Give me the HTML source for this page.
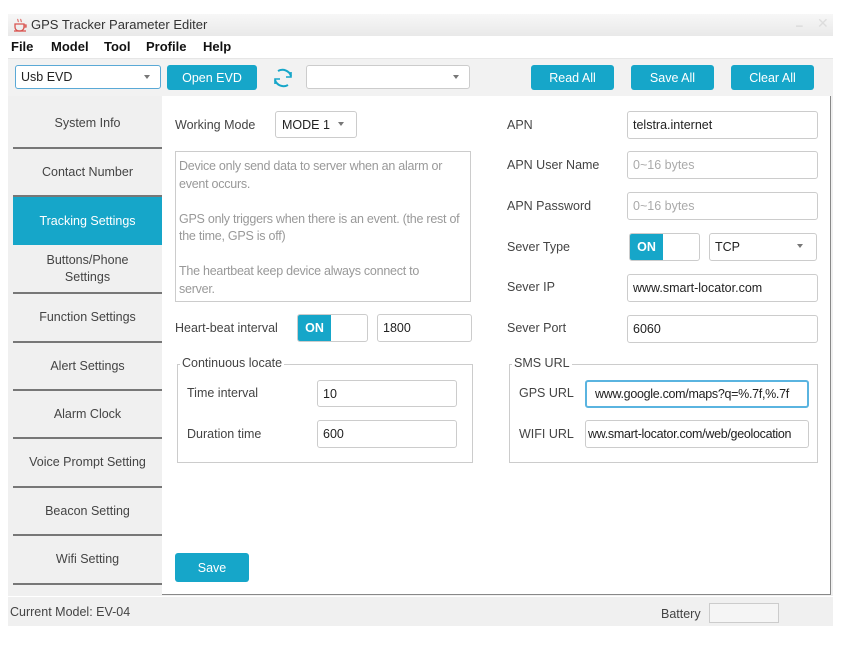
<!DOCTYPE html><html><head><style>
*{box-sizing:border-box;margin:0;padding:0}
body{width:854px;height:647px;background:#fff;position:relative;font-family:"Liberation Sans",sans-serif;font-size:12.5px;color:#444;overflow:hidden}
.a{position:absolute}
.t{position:absolute;white-space:nowrap}
.in{position:absolute;border:1px solid #ccc;border-radius:3px;background:#fff;padding-left:5px;display:flex;align-items:center;font-size:12.5px;color:#222;overflow:hidden;white-space:nowrap}
.btn{position:absolute;background:#16a6c9;color:#fff;border-radius:3px;display:flex;align-items:center;justify-content:center;font-size:12.5px}
.nav{position:absolute;left:13px;width:149px;background:#f0f0f0;border-bottom:2px solid #777;display:flex;align-items:center;justify-content:center;text-align:center;font-size:12.5px;color:#444;line-height:17px}
.tg{position:absolute;border:1px solid #ccc;border-radius:3px;background:#fff;overflow:hidden}
.tg b{display:flex;align-items:center;justify-content:center;width:33px;height:100%;background:#16a6c9;color:#fff;font-size:12.5px}
.ar{position:absolute;width:0;height:0;border-left:3px solid transparent;border-right:3px solid transparent;border-top:4px solid #777}
fieldset{position:absolute;border:1px solid #ccc;}
.lg{position:absolute;background:#fff;padding:0 2px;font-size:12.5px}
</style></head><body>
<div class="a" style="left:8px;top:14px;width:825px;height:22px;background:linear-gradient(#f7f7f7,#e9e9e9)"></div>
<svg class="a" style="left:12px;top:17px" width="16" height="16" viewBox="0 0 16 16"><path d="M3 7h9v3a4 4 0 0 1-4 4h-1a4 4 0 0 1-4-4z M12 8h2v2h-2" fill="none" stroke="#d9534f" stroke-width="1.3"/><path d="M2 14h12" stroke="#d9534f" stroke-width="1.3"/><path d="M6 2c-1 1 1 2 0 3M9 2c-1 1 1 2 0 3" stroke="#d9534f" fill="none"/></svg>
<div class="t" style="left:31px;top:17px;font-size:13px;color:#333">GPS Tracker Parameter Editer</div>
<div class="t" style="left:796px;top:18px;color:#ccc;font-size:12px">–</div>
<div class="t" style="left:817px;top:15px;color:#ddd;font-size:14px">✕</div>
<div class="t" style="left:11px;top:39px;font-weight:bold;font-size:13px;color:#111">File</div>
<div class="t" style="left:51px;top:39px;font-weight:bold;font-size:13px;color:#111">Model</div>
<div class="t" style="left:104px;top:39px;font-weight:bold;font-size:13px;color:#111">Tool</div>
<div class="t" style="left:146px;top:39px;font-weight:bold;font-size:13px;color:#111">Profile</div>
<div class="t" style="left:203px;top:39px;font-weight:bold;font-size:13px;color:#111">Help</div>
<div class="a" style="left:8px;top:58px;width:825px;height:38px;background:#f2f2f2;border-top:1px solid #e6e6e6"></div>
<div class="in" style="left:15px;top:65px;width:146px;height:24px;border-color:#5aa9d6">Usb EVD</div><div class="ar" style="left:144px;top:75px"></div>
<div class="btn" style="left:167px;top:65px;width:90px;height:25px">Open EVD</div>
<svg class="a" style="left:271px;top:66px" width="24" height="24" viewBox="0 0 24 24"><path d="M7 5a9 9 0 0 1 13 5M17 19a9 9 0 0 1-13-5" fill="none" stroke="#16a6c9" stroke-width="2"/><path d="M20 6v5h-5M4 18v-5h5" fill="none" stroke="#16a6c9" stroke-width="1.6"/></svg>
<div class="in" style="left:306px;top:65px;width:164px;height:24px"></div><div class="ar" style="left:453px;top:75px"></div>
<div class="btn" style="left:531px;top:65px;width:83px;height:25px">Read All</div>
<div class="btn" style="left:631px;top:65px;width:83px;height:25px">Save All</div>
<div class="btn" style="left:731px;top:65px;width:83px;height:25px">Clear All</div>
<div class="a" style="left:8px;top:96px;width:825px;height:500px;background:#f0f0f0"></div>
<div class="a" style="left:162px;top:96px;width:669px;height:499px;background:#fff;border-right:1px solid #888;border-bottom:1px solid #888"></div>
<div class="nav" style="top:100px;height:49px">System Info</div>
<div class="nav" style="top:149px;height:48px">Contact Number</div>
<div class="nav" style="top:197px;height:48px;background:#16a6c9;color:#fff;border-bottom:none">Tracking Settings</div>
<div class="nav" style="top:245px;height:49px">Buttons/Phone<br>Settings</div>
<div class="nav" style="top:294px;height:49px">Function Settings</div>
<div class="nav" style="top:343px;height:48px">Alert Settings</div>
<div class="nav" style="top:391px;height:48px">Alarm Clock</div>
<div class="nav" style="top:439px;height:49px">Voice Prompt Setting</div>
<div class="nav" style="top:488px;height:48px">Beacon Setting</div>
<div class="nav" style="top:536px;height:49px">Wifi Setting</div>
<div class="t" style="left:175px;top:118px">Working Mode</div>
<div class="in" style="left:275px;top:111px;width:82px;height:27px;padding-left:6px">MODE 1</div><div class="ar" style="left:338px;top:122px"></div>
<div class="a" style="left:175px;top:151px;width:296px;height:151px;border:1px solid #ccc;padding:6px 3px;color:#999;font-size:12.5px;line-height:17.5px;letter-spacing:-0.25px">Device only send data to server when an alarm or event occurs.<br><br>GPS only triggers when there is an event. (the rest of the time, GPS is off)<br><br>The heartbeat keep device always connect to<br>server.</div>
<div class="t" style="left:175px;top:321px">Heart-beat interval</div>
<div class="tg" style="left:297px;top:314px;width:71px;height:28px"><b>ON</b></div>
<div class="in" style="left:377px;top:314px;width:95px;height:28px">1800</div>
<fieldset style="left:177px;top:364px;width:296px;height:99px"></fieldset><div class="lg" style="left:180px;top:356px">Continuous locate</div>
<div class="t" style="left:187px;top:386px">Time interval</div>
<div class="in" style="left:317px;top:380px;width:140px;height:27px">10</div>
<div class="t" style="left:187px;top:427px">Duration time</div>
<div class="in" style="left:317px;top:420px;width:140px;height:28px">600</div>
<div class="t" style="left:507px;top:118px">APN</div>
<div class="in" style="left:627px;top:111px;width:191px;height:28px">telstra.internet</div>
<div class="t" style="left:507px;top:158px">APN User Name</div>
<div class="in" style="left:627px;top:151px;width:191px;height:28px;color:#aaa">0~16 bytes</div>
<div class="t" style="left:507px;top:199px">APN Password</div>
<div class="in" style="left:627px;top:192px;width:191px;height:28px;color:#aaa">0~16 bytes</div>
<div class="t" style="left:507px;top:240px">Sever Type</div>
<div class="tg" style="left:629px;top:233px;width:71px;height:28px"><b>ON</b></div>
<div class="in" style="left:709px;top:233px;width:108px;height:28px">TCP</div><div class="ar" style="left:797px;top:244px"></div>
<div class="t" style="left:507px;top:280px">Sever IP</div>
<div class="in" style="left:627px;top:274px;width:191px;height:28px">www.smart-locator.com</div>
<div class="t" style="left:507px;top:321px">Sever Port</div>
<div class="in" style="left:627px;top:315px;width:191px;height:28px">6060</div>
<fieldset style="left:509px;top:364px;width:309px;height:99px"></fieldset><div class="lg" style="left:512px;top:356px">SMS URL</div>
<div class="t" style="left:519px;top:386px">GPS URL</div>
<div class="in" style="left:585px;top:380px;width:224px;height:28px;border:2px solid #5ab4e0;padding-left:8px;letter-spacing:-0.3px">www.google.com/maps?q=%.7f,%.7f</div>
<div class="t" style="left:519px;top:427px">WIFI URL</div>
<div class="in" style="left:585px;top:420px;width:224px;height:28px;padding-left:2px;letter-spacing:-0.3px">ww.smart-locator.com/web/geolocation</div>
<div class="btn" style="left:175px;top:553px;width:74px;height:29px">Save</div>
<div class="a" style="left:8px;top:597px;width:825px;height:29px;background:#f0f0f0"></div>
<div class="t" style="left:10px;top:605px">Current Model: EV-04</div>
<div class="t" style="left:661px;top:607px">Battery</div>
<div class="a" style="left:709px;top:603px;width:70px;height:20px;border:1px solid #ccc;background:#f5f5f5"></div>
</body></html>
